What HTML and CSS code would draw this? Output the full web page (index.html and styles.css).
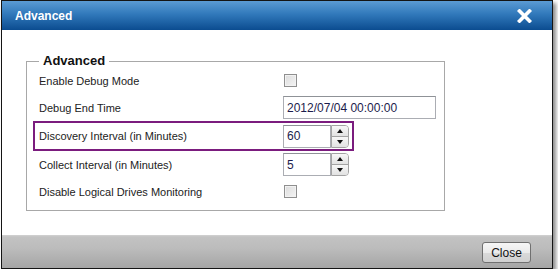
FILE: index.html
```html
<!DOCTYPE html>
<html lang="en">
<head>
    <meta charset="UTF-8">
    <meta name="viewport" content="width=device-width, initial-scale=1.0">
    <title>Advanced</title>
    <link rel="stylesheet" href="styles.css">
</head>
<body>
    <div class="dialog">
        <div class="titlebar">
            <span class="title">Advanced</span>
            <span class="close-x">
                <svg width="15" height="14" viewBox="0 0 15 14">
                    <path d="M2.5 2 L12.5 12 M12.5 2 L2.5 12" stroke="#fff" stroke-width="3.6" stroke-linecap="square"/>
                </svg>
            </span>
        </div>

        <div class="content">
            <fieldset>
                <legend>Advanced</legend>

                <div class="row">
                    <span class="label">Enable Debug Mode</span>
                    <span class="check"></span>
                </div>

                <div class="row">
                    <span class="label">Debug End Time</span>
                    <input class="text-input" type="text" value="2012/07/04 00:00:00">
                </div>

                <div class="row highlight">
                    <span class="label">Discovery Interval (in Minutes)</span>
                    <div class="spinner">
                        <input class="num-input" type="text" value="60">
                        <div class="spin">
                            <span class="spin-btn up"></span>
                            <span class="spin-btn down"></span>
                        </div>
                    </div>
                </div>

                <div class="row">
                    <span class="label">Collect Interval (in Minutes)</span>
                    <div class="spinner">
                        <input class="num-input" type="text" value="5">
                        <div class="spin">
                            <span class="spin-btn up"></span>
                            <span class="spin-btn down"></span>
                        </div>
                    </div>
                </div>

                <div class="row">
                    <span class="label">Disable Logical Drives Monitoring</span>
                    <span class="check"></span>
                </div>
            </fieldset>
        </div>

        <div class="footer">
            <button class="btn">Close</button>
        </div>
    </div>
</body>
</html>
```

FILE: styles.css
```css
* {
    box-sizing: border-box;
    margin: 0;
    padding: 0;
}

body {
    font-family: 'Liberation Sans', Arial, sans-serif;
    background: #fff;
    color: #222;
}

.dialog {
    width: 552px;
    height: 269px;
    margin-left: 1px;
    border: 1px solid #141414;
    background: #fff;
    box-shadow: 3px 3px 4px rgba(0, 0, 0, 0.45);
    display: flex;
    flex-direction: column;
}

.titlebar {
    flex: none;
    height: 29px;
    background: linear-gradient(#5b9bd4, #3179bb 45%, #0b4c90);
    color: #fff;
    display: flex;
    align-items: center;
    justify-content: space-between;
    padding: 0 20px 0 13px;
}

.title {
    font-size: 12px;
    font-weight: bold;
}

.close-x svg {
    display: block;
}

.content {
    flex: 1;
    padding: 25px 0 0 24px;
}

fieldset {
    width: 419px;
    border: 1px solid #a8a8a8;
    padding: 0 0 5px 6px;
}

legend {
    margin-left: 6px;
    padding: 0 4px;
    font-size: 13px;
    font-weight: bold;
    line-height: 12px;
    color: #111;
}

.row {
    display: flex;
    align-items: center;
    width: 321px;
    height: 27px;
    border: 2px solid transparent;
    padding-left: 4px;
}

.row.highlight {
    height: 30px;
    border-color: #7b1c7e;
}

.label {
    width: 244px;
    flex: none;
    font-size: 11px;
    color: #222;
}

.check {
    width: 13px;
    height: 13px;
    margin-left: 1px;
    border: 1px solid #8f8f8f;
    background: linear-gradient(135deg, #dcdcdc, #f4f4f4);
    box-shadow: inset 0 0 0 1px #f2f2f2;
}

.text-input,
.num-input {
    height: 23px;
    border: 1px solid #abadb3;
    border-top-color: #8f9297;
    padding-left: 3px;
    font-family: 'Liberation Sans', Arial, sans-serif;
    font-size: 12px;
    color: #1c1c4c;
    background: #fff;
    outline: none;
}

.text-input {
    width: 153px;
}

.spinner {
    display: flex;
}

.num-input {
    width: 48px;
}

.spin {
    width: 18px;
    height: 23px;
    display: flex;
    flex-direction: column;
    border: 1px solid #a3a3a3;
    border-radius: 0 4px 4px 0;
    overflow: hidden;
}

.spin-btn {
    flex: 1;
    display: flex;
    align-items: center;
    justify-content: center;
    background: linear-gradient(#f7f7f7, #e2e2e2);
}

.spin-btn.down {
    border-top: 1px solid #a3a3a3;
}

.spin-btn::after {
    content: '';
    border-left: 3px solid transparent;
    border-right: 3px solid transparent;
}

.spin-btn.up::after {
    border-bottom: 4px solid #111;
}

.spin-btn.down::after {
    border-top: 4px solid #111;
}

.footer {
    flex: none;
    height: 33px;
    background: linear-gradient(#d2d2d2, #c2c2c2 2px, #bcbcbc 40%, #a5a5a5);
    display: flex;
    justify-content: flex-end;
    align-items: flex-start;
    padding: 7px 21px 0 0;
}

.btn {
    width: 49px;
    height: 21px;
    border: 1px solid #707070;
    border-radius: 3px;
    background: linear-gradient(#f6f6f6, #ebebeb 50%, #dadada 51%, #d0d0d0);
    font-family: 'Liberation Sans', Arial, sans-serif;
    font-size: 12px;
    color: #111;
}
```
